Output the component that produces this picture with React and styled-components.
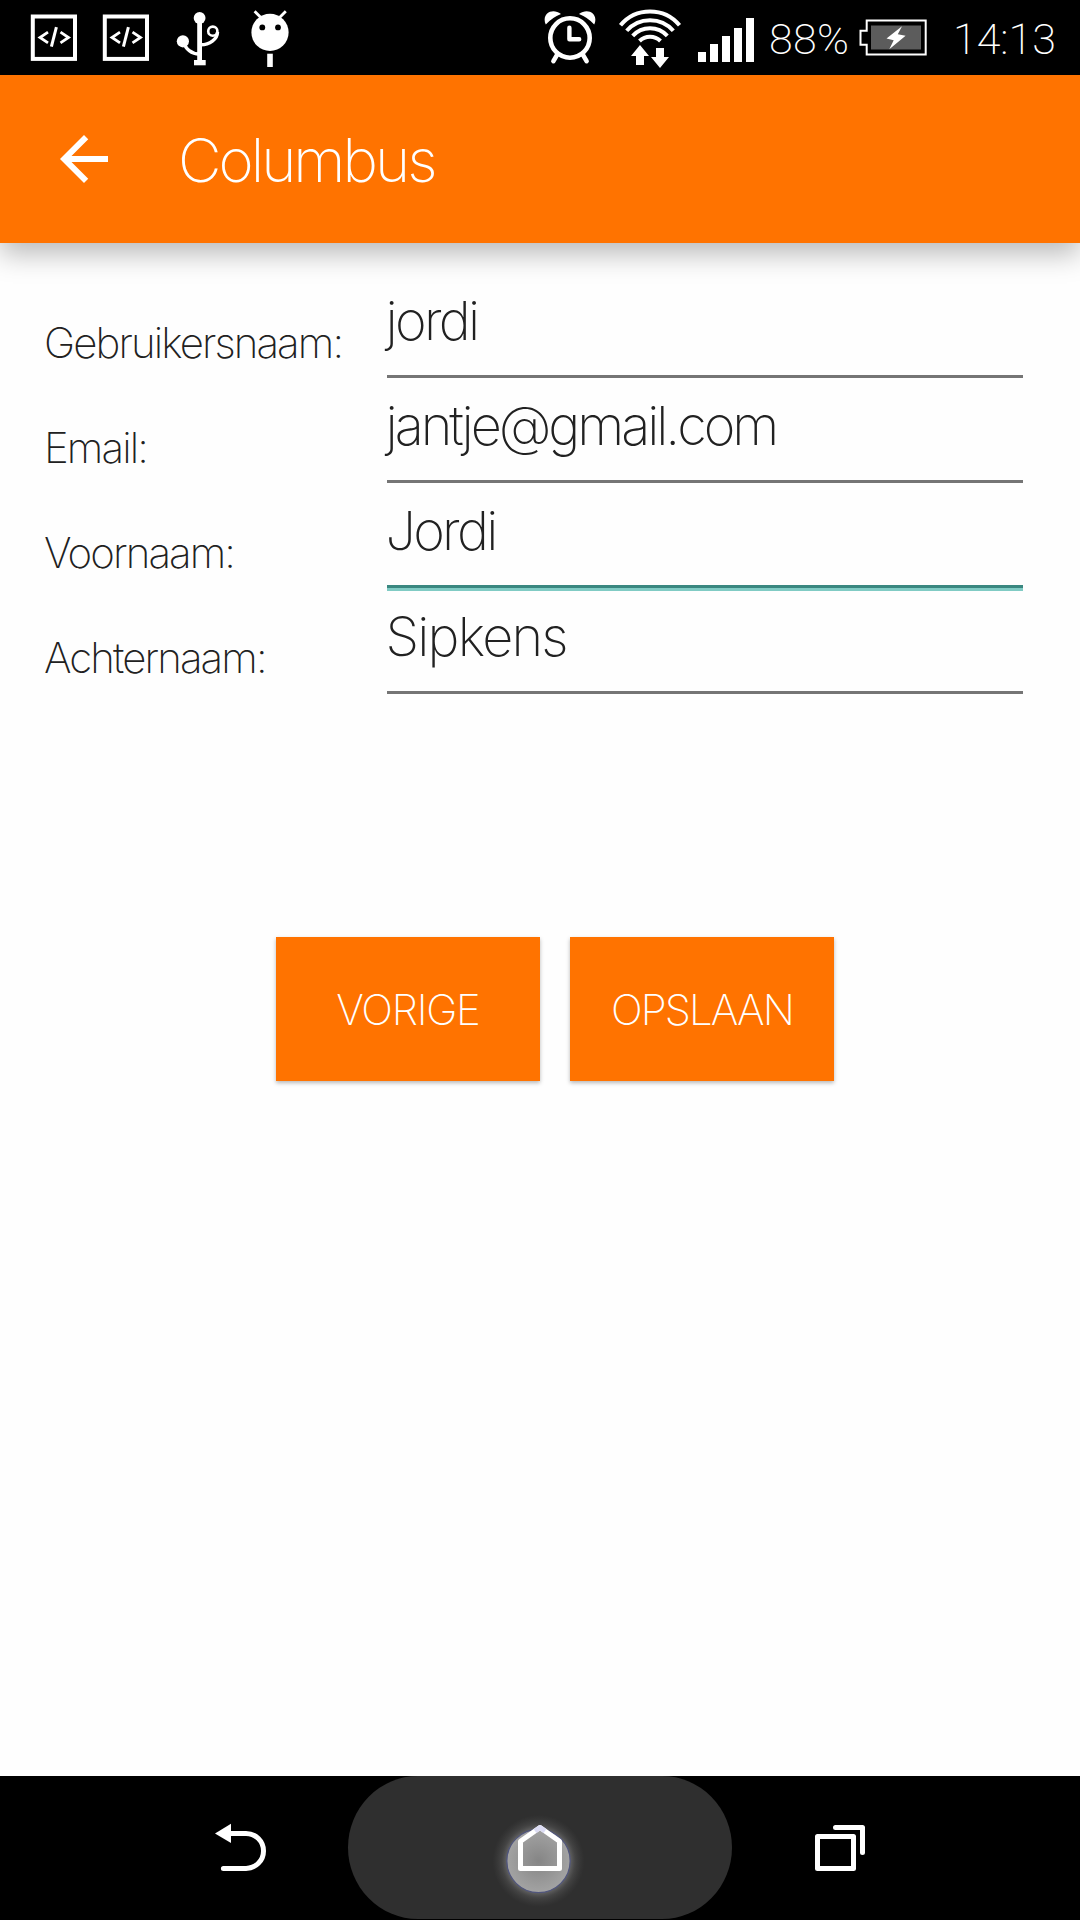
import React from 'react';
import styled, { createGlobalStyle } from 'styled-components';

const GlobalStyle = createGlobalStyle`
  * { box-sizing: border-box; }
  body { margin: 0; background: #fefefe; }
`;

const Screen = styled.div`
  display: flex;
  flex-direction: column;
  width: 1080px;
  height: 1920px;
  overflow: hidden;
  background: #fefefe;
  color: #212121;
  font-family: Inter, "Liberation Sans", sans-serif;
  font-weight: 170;
`;

const StatusBar = styled.header`
  display: flex;
  align-items: flex-start;
  justify-content: space-between;
  flex: none;
  height: 75px;
  padding: 0 24px 0 28px;
  background: #000;
  color: #fff;
`;

const StatusGroup = styled.div`
  display: flex;
  align-items: flex-start;
  gap: ${(p) => p.$gap || 0}px;
`;

const Glyph = styled.svg`
  display: block;
  flex: none;
`;

const StatusText = styled.span`
  width: ${(p) => p.$width}px;
  font-family: Roboto, "Liberation Sans", sans-serif;
  font-size: 43px;
  font-weight: 180;
  line-height: 79px;
  letter-spacing: ${(p) => p.$tracking}px;
  white-space: nowrap;
`;

const AppBar = styled.div`
  display: flex;
  align-items: center;
  flex: none;
  height: 168px;
  padding-left: 48px;
  background: #ff7300;
  color: #fff;
  box-shadow: 0 11px 26px rgba(0, 0, 0, 0.27);
`;

const Title = styled.h1`
  margin: 0;
  padding: 2px 0 0 58px;
  font-size: 60px;
  font-weight: 170;
  line-height: 72px;
  letter-spacing: -3px;
`;

const Content = styled.main`
  flex: 1;
  padding: 30px 57px 0 45px;
`;

const Field = styled.div`
  display: grid;
  grid-template-columns: 342px 636px;
  height: ${(p) => (p.$last ? 106 : 105)}px;
`;

const Label = styled.label`
  padding-top: 50px;
  font-size: 42px;
  line-height: 40px;
  letter-spacing: -1.9px;
  text-indent: -1px;
  white-space: nowrap;
`;

const Value = styled.div`
  height: ${(p) => (p.$focused ? 108 : p.$last ? 106 : 105)}px;
  padding-top: ${(p) => (p.$last ? 18 : 17)}px;
  border-bottom: 3px solid ${(p) => (p.$focused ? '#80cbc4' : '#757575')};
  box-shadow: ${(p) => (p.$focused ? 'inset 0 -3px #3a8780' : 'none')};
  font-size: 54px;
  line-height: 61px;
  letter-spacing: ${(p) => p.$tracking}px;
  text-indent: -1.5px;
  white-space: nowrap;
`;

const Actions = styled.div`
  display: flex;
  gap: 30px;
  padding: 243px 0 0 231px;
`;

const Button = styled.button`
  width: 264px;
  height: 144px;
  padding: 1px 0 0;
  border: 0;
  background: #ff7300;
  color: #fff;
  font: inherit;
  font-size: 42px;
  letter-spacing: ${(p) => p.$tracking}px;
  box-shadow: 0 2px 4px rgba(0, 0, 0, 0.28);
`;

const NavBar = styled.nav`
  display: grid;
  grid-template-columns: 348px 384px 348px;
  flex: none;
  height: 144px;
  background: #000;
`;

const NavItem = styled.div`
  height: 143px;
  padding: 30px 0 0 ${(p) => p.$inset}px;
  border-radius: 70px / 71.5px;
  background: ${(p) => (p.$pressed ? '#2f2f2f' : 'transparent')};
`;

const CodeIcon = () => (
  <Glyph width="52" height="70" viewBox="28 0 52 70" fill="none" stroke="#fff">
    <rect x="32.8" y="16.5" width="42.2" height="42.4" strokeWidth="4" />
    <path d="M48 32.2 40 37.5l8 5.3M60.5 32.2l8 5.3-8 5.3" strokeWidth="2.8" />
    <path d="m56.4 27.2-5 19.4" strokeWidth="3" />
  </Glyph>
);

const UsbIcon = () => (
  <Glyph width="46" height="70" viewBox="176 0 46 70" fill="none" stroke="#fff">
    <path d="M199.6 18v44" strokeWidth="4.8" />
    <path d="M184 42c1 7 8 12 15 12M217.5 32c0 7-8 13-17 12.8" strokeWidth="3.4" />
    <circle cx="212.8" cy="31.2" r="4.6" strokeWidth="2.6" />
    <g fill="#fff" stroke="none">
      <circle cx="199.6" cy="18" r="5.9" />
      <circle cx="182.9" cy="41.3" r="6.1" />
      <rect x="194" y="60" width="11.7" height="5.3" />
    </g>
  </Glyph>
);

const DroidIcon = () => (
  <Glyph width="40" height="70" viewBox="250 0 40 70">
    <path d="m254.6 11.3 7 7M285.8 11.3l-7 7" stroke="#fff" strokeWidth="2.8" />
    <circle cx="270" cy="32.4" r="18.6" fill="#fff" />
    <circle cx="262.3" cy="27.4" r="2.9" />
    <circle cx="278" cy="27.4" r="2.9" />
    <path d="M267.2 53.7h5.6v13.3h-5.6z" fill="#fff" />
  </Glyph>
);

const AlarmIcon = () => (
  <Glyph width="56" height="70" viewBox="542 0 56 70" fill="none" stroke="#fff">
    <circle cx="570" cy="38" r="19.7" strokeWidth="4.6" />
    <path d="M569.4 27.8v11.4h9.8" strokeWidth="4.4" strokeLinecap="round" strokeLinejoin="round" />
    <path d="m557.2 54.6-3.8 6.6M582.8 54.6l3.8 6.6" strokeWidth="4.6" strokeLinecap="round" />
    <path d="M545.8 24.6C541 14 552 7.300 561 14Q552 17.500 545.800 24.600ZM594.200 24.600C599 14 588 7.300 579 14Q588 17.500 594.200 24.600Z" fill="#fff" stroke="none" />
  </Glyph>
);

const WifiIcon = () => (
  <Glyph width="68" height="70" viewBox="616 0 68 70">
    <g fill="none" stroke="#fff" strokeWidth="4">
      <path d="M620.5 25.3A38.500 38.500 0 0 1 679.500 25.300" />
      <path d="M626.7 30.8A31 31 0 0 1 673.300 30.800" />
      <path d="M632.7 35.8A23.500 23.500 0 0 1 667.300 35.800" />
      <path d="M639.5 41A15 15 0 0 1 660.500 41" />
    </g>
    <path d="m640 45 9 11h-5v9h-8v-9h-5zM656 48h8v9h5l-9 11-9-11h5z" fill="#fff" />
  </Glyph>
);

const SignalIcon = () => (
  <Glyph width="58" height="70" viewBox="697 0 58 70" fill="#fff">
    <path d="M698 52h8v10h-8zM710 44h8v18h-8zM722 36h8v26h-8zM734 28h8v34h-8zM746 18h8v44h-8z" />
  </Glyph>
);

const BatteryIcon = () => (
  <Glyph width="70" height="70" viewBox="858 0 70 70">
    <path d="M866.7 20.4h59v34h-59v-9.600h-6.200v-14.100h6.200z" fill="none" stroke="#fff" strokeWidth="2" />
    <path d="M871 25.500h50v24h-50z" fill="#5c5c5c" />
    <path d="m902 26.300-15.500 12.200 7.200 1.800-4.400 9 16.300-13.500-7.800-1.600z" fill="#fff" />
  </Glyph>
);

const ArrowIcon = () => (
  <Glyph width="72" height="72" viewBox="0 0 24 24" fill="#fff">
    <path d="M20 11H7.830l5.590-5.590L12 4l-8 8 8 8 1.410-1.410L7.830 13H20v-2z" />
  </Glyph>
);

const BackIcon = () => (
  <Glyph width="60" height="80" viewBox="210 1806 60 80">
    <path d="M229 1833.400h17a17.500 17.500 0 0 1 0 35h-22.600" fill="none" stroke="#fff" strokeWidth="5" strokeLinecap="round" />
    <path d="m215 1833.400 16-9.600v19.200z" fill="#fff" />
  </Glyph>
);

const HomeIcon = () => (
  <Glyph width="104" height="112" viewBox="488 1806 104 112">
    <defs>
      <radialGradient id="touchHalo">
        <stop offset="0.64" stopColor="#aaa" stopOpacity="0.55" />
        <stop offset="0.8" stopColor="#888" stopOpacity="0.23" />
        <stop offset="1" stopColor="#666" stopOpacity="0" />
      </radialGradient>
      <radialGradient id="touchDot">
        <stop offset="0" stopColor="#858585" />
        <stop offset="1" stopColor="#a3a3a3" />
      </radialGradient>
    </defs>
    <circle cx="538.5" cy="1861" r="46" fill="url(#touchHalo)" />
    <circle cx="538.5" cy="1861" r="31.7" fill="url(#touchDot)" stroke="#50557c" strokeWidth="1.3" />
    <path d="m520.5 1841.300 19.500-13.800 19.500 13.800v27.100h-39z" fill="none" stroke="#fff" strokeWidth="5" strokeLinejoin="round" />
    <path d="m535 1831 5-3.500 5 3.500" fill="none" stroke="#dcdcf4" strokeWidth="4.800" strokeLinejoin="round" />
  </Glyph>
);

const RecentsIcon = () => (
  <Glyph width="60" height="80" viewBox="810 1806 60 80" fill="none" stroke="#fff" strokeWidth="5" strokeLinejoin="round" strokeLinecap="round">
    <path d="M817.500 1836.500h36v32h-36zM835.500 1827.500h27v25" />
  </Glyph>
);

const FIELDS = [
  { label: 'Gebruikersnaam:', value: 'jordi', tracking: -2.7 },
  { label: 'Email:', value: 'jantje@gmail.com', tracking: -3.05 },
  { label: 'Voornaam:', value: 'Jordi', tracking: -2.7, focused: true },
  { label: 'Achternaam:', value: 'Sipkens', tracking: -1.8, last: true },
];

export default function App() {
  return (
    <Screen>
      <GlobalStyle />
      <StatusBar>
        <StatusGroup $gap={24}>
          <StatusGroup $gap={20}>
            <CodeIcon />
            <CodeIcon />
          </StatusGroup>
          <StatusGroup $gap={28}>
            <UsbIcon />
            <DroidIcon />
          </StatusGroup>
        </StatusGroup>
        <StatusGroup>
          <StatusGroup $gap={13}>
            <StatusGroup $gap={18}>
              <AlarmIcon />
              <WifiIcon />
            </StatusGroup>
            <StatusGroup $gap={14}>
              <SignalIcon />
              <StatusText $width={89} $tracking={0.3}>88%</StatusText>
            </StatusGroup>
          </StatusGroup>
          <StatusGroup $gap={25}>
            <BatteryIcon />
            <StatusText $width={103} $tracking={0}>14:13</StatusText>
          </StatusGroup>
        </StatusGroup>
      </StatusBar>
      <AppBar>
        <ArrowIcon />
        <Title>Columbus</Title>
      </AppBar>
      <Content>
        {FIELDS.map((f) => (
          <Field key={f.label} $last={f.last}>
            <Label>{f.label}</Label>
            <Value $tracking={f.tracking} $focused={f.focused} $last={f.last}>{f.value}</Value>
          </Field>
        ))}
        <Actions>
          <Button $tracking={-1.2}>VORIGE</Button>
          <Button $tracking={-1.9}>OPSLAAN</Button>
        </Actions>
      </Content>
      <NavBar>
        <NavItem $inset={210}><BackIcon /></NavItem>
        <NavItem $inset={140} $pressed><HomeIcon /></NavItem>
        <NavItem $inset={78}><RecentsIcon /></NavItem>
      </NavBar>
    </Screen>
  );
}
